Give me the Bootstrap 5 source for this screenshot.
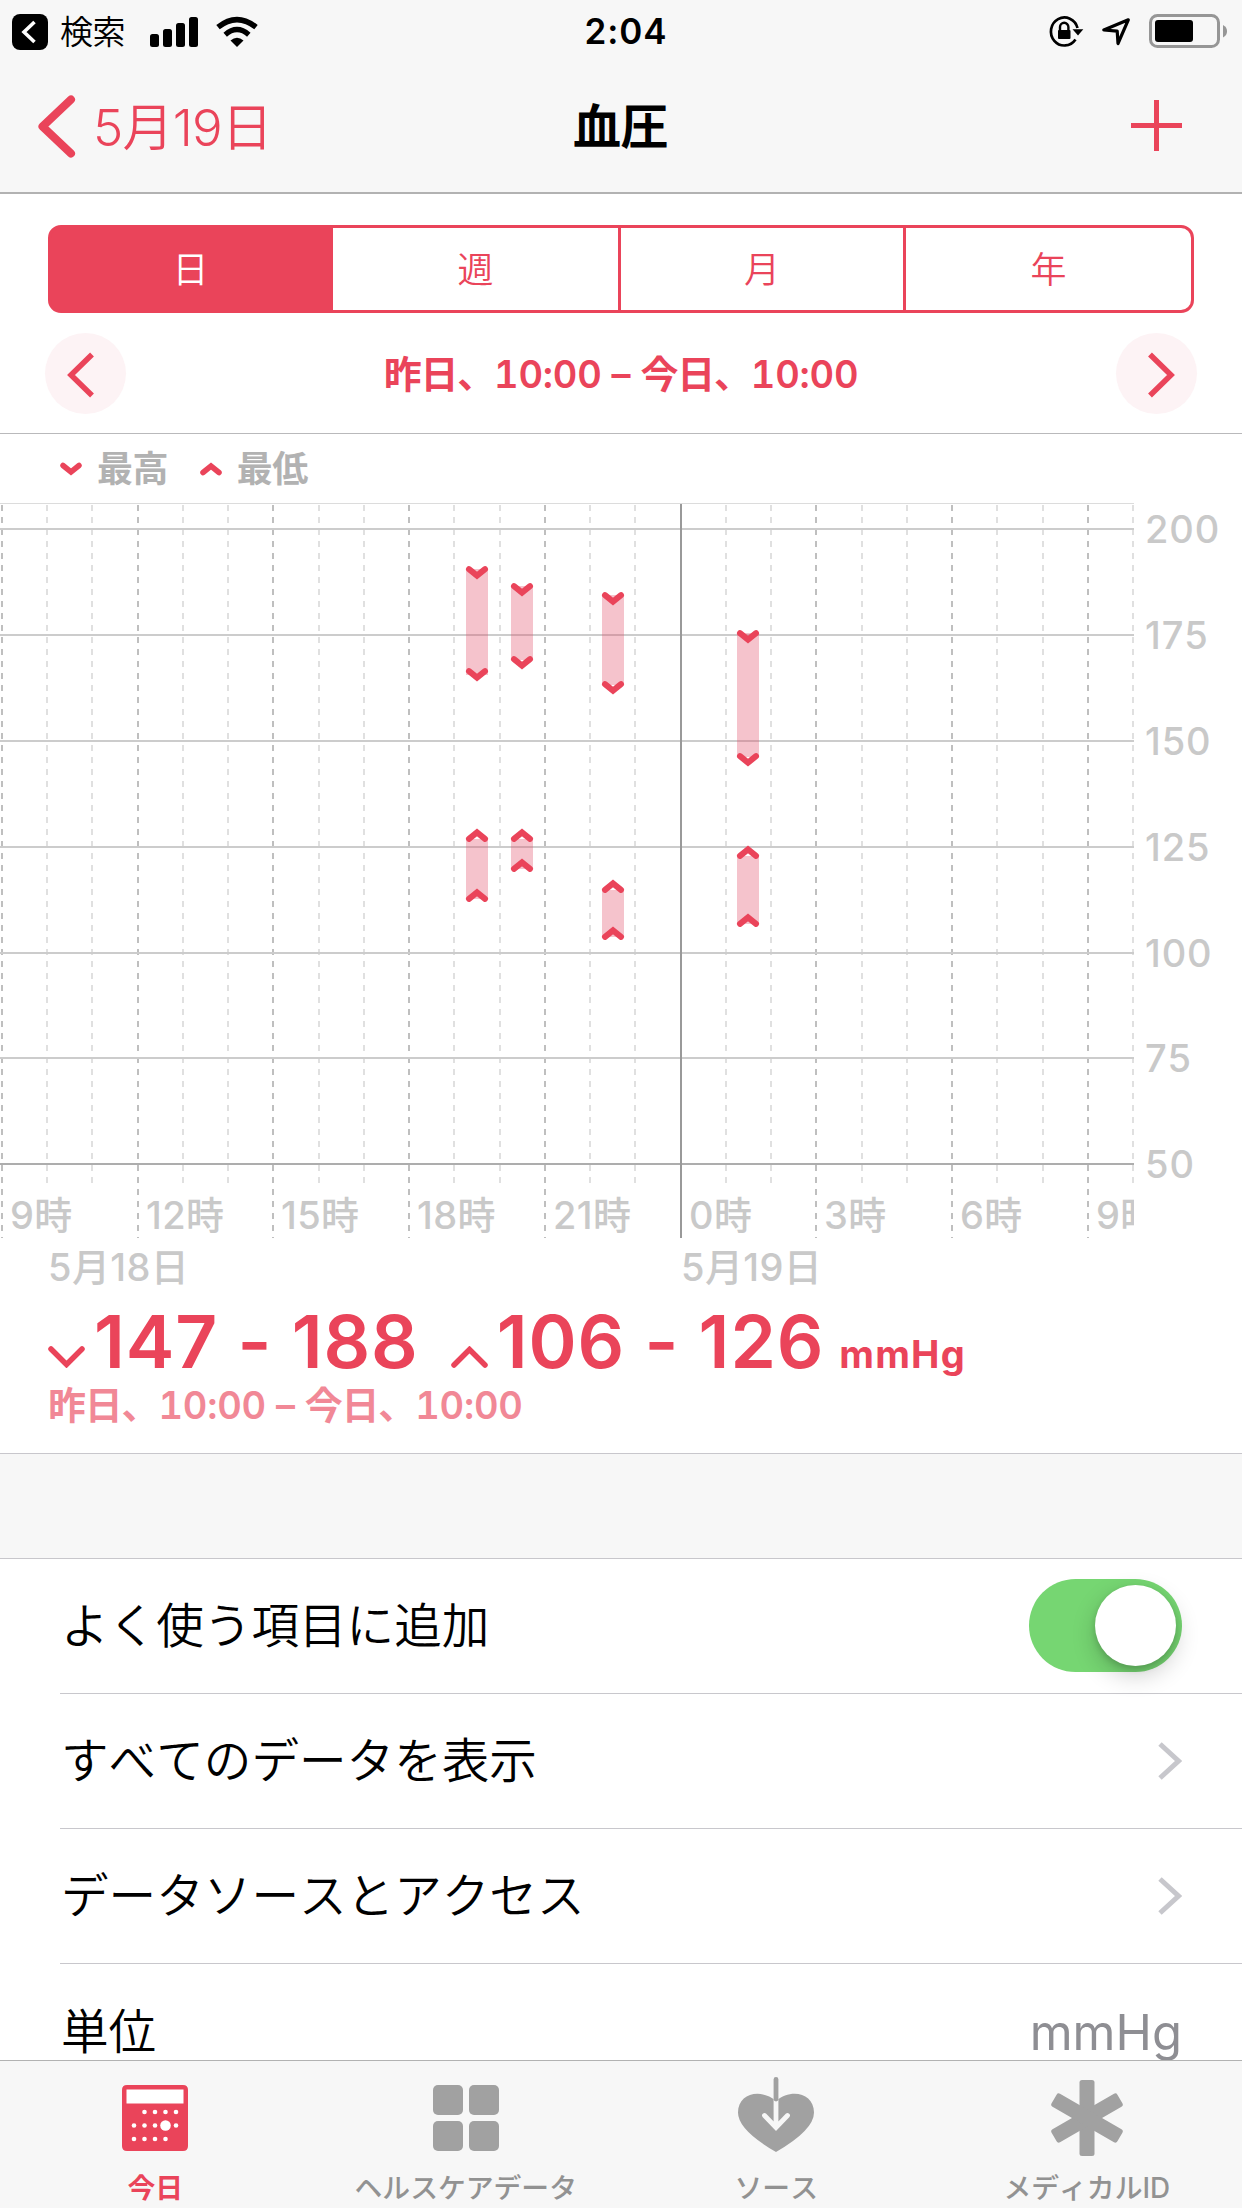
<!DOCTYPE html>
<html lang="ja">
<head>
<meta charset="utf-8">
<meta name="viewport" content="width=device-width, initial-scale=1">
<title>血圧</title>
<link rel="stylesheet" href="https://cdn.jsdelivr.net/npm/bootstrap@5.3.0/dist/css/bootstrap.min.css">
<style>
:root{--rd:#ea445a;--hair:#c8c7cc;--bar:#f7f7f7}
body{width:1242px;height:2208px;overflow:hidden;background:#fff;color:#000;font-family:Inter,"Noto Sans CJK JP",sans-serif;font-size:38px;line-height:1;white-space:nowrap;font-kerning:none}
svg{display:block;flex:none}
.screen{height:2208px}
.tint{color:var(--rd)}
.top-bar{height:194px;background:var(--bar);border-bottom:2px solid #b2b2b2}
.status{height:64px;padding:0 15px 0 12px}
.status .side{width:480px}
.back-app{font-size:33px;margin-left:12px;letter-spacing:-.5px;font-weight:350}
.clock{font-size:35px;font-weight:600;letter-spacing:.9px;margin-left:13px;padding-bottom:2px}
.title-row{height:128px;padding:0 60px 2px 38px}
.title-row .side{width:400px}
.back-label{font-size:51px;letter-spacing:-.8px;margin-left:17px;font-weight:350}
.title{font-size:48px;font-weight:700;letter-spacing:-.5px;margin-left:21px}
.seg{margin:31px 48px 0;width:1146px;height:88px}
.seg .btn{--bs-btn-color:var(--rd);--bs-btn-border-color:var(--rd);--bs-btn-active-bg:var(--rd);--bs-btn-active-border-color:var(--rd);--bs-btn-active-color:#fff;--bs-btn-border-width:3px;--bs-btn-border-radius:13px;--bs-btn-font-size:36px;--bs-btn-line-height:1;padding:1px 0 0;flex:0 0 291px;font-weight:350}
.seg .btn:first-child{flex-basis:285px}
.seg .btn:nth-child(3){flex-basis:288px}
.seg.btn-group>.btn:not(:first-child){margin-left:-3px}
.pager{height:121px;padding:1px 45px 0;border-bottom:1px solid #b9b9bb}
.pager .btn{width:81px;height:81px;background:#fdf3f5;padding:0}
.range,.sub{font-size:38px;font-weight:600;font-variant-numeric:tabular-nums;letter-spacing:-.2px}
.cjk{letter-spacing:-1.2px}
.legend-row{height:69px;padding:1px 60px 0;color:#b2b2b2;font-size:36px;font-weight:700;letter-spacing:-.6px}
.chart-text{fill:#c9c9c9;font-size:38px;font-weight:500}
.scale{letter-spacing:.9px}
.hours{letter-spacing:.4px}
.summary{height:151px;padding:7px 48px 0}
.big{font-size:73px;font-weight:600;line-height:66px;letter-spacing:.9px}
.unit{font-size:38px;font-weight:700;letter-spacing:1.2px}
.sub{opacity:.63;line-height:36px}
.spacer{height:106px;background:var(--bar);border-top:1px solid var(--hair);border-bottom:1px solid var(--hair)}
.rows{padding-left:60px}
.rows .list-group-item{height:135.1px;padding:0 60px 0 1px;border-color:var(--hair);color:#000;font-size:47.6px;background:none;font-weight:350}
.rows .value{color:#8e8e93;font-size:49px;font-weight:400;padding-top:2px}
.form-switch{padding:0;min-height:0}
.form-switch .form-check-input{display:block;width:153px;height:93px;margin:0;float:none;border:0;border-radius:47px;background:#76d672;position:relative;overflow:visible}
.form-switch .form-check-input::after{content:"";position:absolute;right:6px;top:6px;width:81px;height:81px;border-radius:50%;background:#fff;box-shadow:0 9px 24px rgba(0,0,0,.2),0 3px 6px rgba(0,0,0,.15)}
.tabs{height:148px;background:var(--bar);border-top:1px solid #b2b2b2;left:0;right:0;bottom:0}
.tabs .nav-link{padding:15px 0 0;color:#929292;font-size:27.8px;font-weight:500}
.tabs .nav-link.active{color:var(--rd);font-weight:600}
.tabs span{margin-top:13px}
</style>
<script src="https://cdn.jsdelivr.net/npm/bootstrap@5.3.0/dist/js/bootstrap.bundle.min.js"></script>
</head>
<body>
<div class="screen d-flex flex-column position-relative overflow-hidden">
<header class="top-bar flex-shrink-0">
 <div class="status d-flex align-items-center justify-content-between">
  <div class="side d-flex align-items-center">
   <svg width="36" height="36"><rect width="36" height="36" rx="8"/><path d="M22.500 8 12 18l10.500 10" fill="none" stroke="#fff" stroke-width="3.600"/></svg>
   <span class="back-app">検索</span>
   <svg width="110" height="32" viewBox="148 14 110 32" style="margin-left:23px"><rect x="150" y="32" width="9" height="13" rx="2.500"/><rect x="163" y="27" width="9" height="18" rx="2.500"/><rect x="176" y="21" width="9" height="24" rx="2.500"/><rect x="189" y="15" width="9" height="30" rx="2.500"/><path d="M218 25.200Q237 10 256 25.200" fill="none" stroke="#000" stroke-width="5.500"/><path d="M225.200 32.700Q237 22.500 248.800 32.700" fill="none" stroke="#000" stroke-width="5.300"/><path d="M230.500 38.500Q237 33 243.500 38.500L237 45z"/></svg>
  </div>
  <div class="clock">2:04</div>
  <div class="side d-flex align-items-center justify-content-end">
   <svg width="180" height="36" viewBox="1047 13 180 36"><path d="M1075.500 38.500A13.500 14 0 1 1 1077.500 27" fill="none" stroke="#000" stroke-width="2.700"/><path d="M1072.500 28.300h10.800L1078 34.500z"/><rect x="1058" y="29" width="12.500" height="9" rx="1"/><path d="M1060 30v-4a4.200 4.200 0 0 1 8.400 0v4" fill="none" stroke="#000" stroke-width="2.400"/><path d="M1103.800 29 1128.300 18.800 1118 42.500 1117.200 30.200z" fill="none" stroke="#000" stroke-width="3.200" stroke-linejoin="round"/><rect x="1150.500" y="14.500" width="68" height="31" rx="7" fill="none" stroke="#969696" stroke-width="3"/><rect x="1155" y="19" width="38" height="22" rx="3"/><path d="M1223 24v12.500q4-2 4-6.200t-4-6.300z" fill="#969696"/></svg>
  </div>
 </div>
 <div class="title-row d-flex align-items-center justify-content-between">
  <div class="side d-flex align-items-center tint">
   <svg width="38" height="64"><path d="M33 4.500 4.500 31.500 33 58.500" fill="none" stroke="currentColor" stroke-width="8" stroke-linecap="round" stroke-linejoin="round"/></svg>
   <span class="back-label">5月19日</span>
  </div>
  <div class="title">血圧</div>
  <div class="side d-flex justify-content-end tint pb-1"><svg width="51" height="51"><path d="M0 25.500H51M25.500 0V51" stroke="currentColor" stroke-width="5"/></svg></div>
 </div>
</header>

<div class="btn-group seg flex-shrink-0">
 <button class="btn active d-flex align-items-center justify-content-center">日</button>
 <button class="btn d-flex align-items-center justify-content-center">週</button>
 <button class="btn d-flex align-items-center justify-content-center">月</button>
 <button class="btn d-flex align-items-center justify-content-center">年</button>
</div>

<div class="pager d-flex align-items-center justify-content-between flex-shrink-0 tint">
 <button class="btn rounded-circle tint border-0"><svg width="81" height="81"><path d="M47 21.500 26 42 47 62.500" fill="none" stroke="currentColor" stroke-width="5.500"/></svg></button>
 <div class="range"><span class="cjk">昨日、</span>10:00 – <span class="cjk">今日、</span>10:00</div>
 <button class="btn rounded-circle tint border-0"><svg width="81" height="81"><path d="M34 21.500 55 42 34 62.500" fill="none" stroke="currentColor" stroke-width="5.500"/></svg></button>
</div>

<div class="legend-row d-flex align-items-center flex-shrink-0">
 <svg class="tint" width="22" height="14"><path d="M3 3.500 11 10 19 3.500" fill="none" stroke="currentColor" stroke-width="5.500" stroke-linecap="round"/></svg>
 <span style="margin:0 32px 0 15px">最高</span>
 <svg class="tint" width="22" height="14"><path d="M3 10.500 11 4 19 10.500" fill="none" stroke="currentColor" stroke-width="5.500" stroke-linecap="round"/></svg>
 <span style="margin-left:15px">最低</span>
</div>

<svg class="chart" width="1242" height="799" viewBox="0 503 1242 799">
 <defs>
  <clipPath id="plot"><rect x="0" y="503" width="1134" height="799"/></clipPath>
  <path id="dn" d="M-8 3.200 0 9.700 8 3.200" fill="none" stroke="#ea445a" stroke-width="6" stroke-linecap="round"/>
  <path id="up" d="M-8 9.800 0 3.300 8 9.800" fill="none" stroke="#ea445a" stroke-width="6" stroke-linecap="round"/>
 </defs>
 <path d="M0 503.500H1134" stroke="#dcdcdc" stroke-width="1"/>
 <path d="M47 505V1183M92 505V1183M183 505V1183M228 505V1183M319 505V1183M364 505V1183M454 505V1183M500 505V1183M590 505V1183M635 505V1183M726 505V1183M771 505V1183M862 505V1183M907 505V1183M997 505V1183M1043 505V1183M1133 505V1183" stroke="#e0e0e0" stroke-width="2" stroke-dasharray="6"/>
 <path d="M2 505V1238M138 505V1238M273 505V1238M409 505V1238M545 505V1238M816 505V1238M952 505V1238M1088 505V1238" stroke="#bfbfbf" stroke-width="2" stroke-dasharray="6"/>
 <path d="M0 529H1134M0 635H1134M0 741H1134M0 847H1134M0 953H1134M0 1058H1134" stroke="#ccc" stroke-width="2"/>
 <path d="M0 1164H1134" stroke="#adadad" stroke-width="2"/>
 <path d="M681 504V1238" stroke="#999" stroke-width="2"/>
 <g fill="#e04863" fill-opacity=".33"><path d="M466 569h22v106h-22zM511 586h22v74h-22zM602 595h22v90h-22zM737 633h22v124h-22zM466 839h22v60h-22zM511 839h22v30h-22zM602 890h22v47h-22zM737 856h22v68h-22z"/></g>
 <use href="#dn" x="477" y="566"/><use href="#dn" x="477" y="668"/><use href="#dn" x="522" y="583"/><use href="#dn" x="522" y="656"/><use href="#dn" x="613" y="592"/><use href="#dn" x="613" y="681"/><use href="#dn" x="748" y="630"/><use href="#dn" x="748" y="753"/>
 <use href="#up" x="477" y="829"/><use href="#up" x="477" y="889"/><use href="#up" x="522" y="829"/><use href="#up" x="522" y="859"/><use href="#up" x="613" y="880"/><use href="#up" x="613" y="927"/><use href="#up" x="748" y="846"/><use href="#up" x="748" y="914"/>
 <g class="chart-text">
  <g class="scale"><text x="1145" y="543">200</text><text x="1145" y="649">175</text><text x="1145" y="755">150</text><text x="1145" y="861">125</text><text x="1145" y="967">100</text><text x="1145" y="1072">75</text><text x="1145" y="1178">50</text></g>
  <g class="hours" clip-path="url(#plot)"><text x="10" y="1229">9時</text><text x="146" y="1229">12時</text><text x="281" y="1229">15時</text><text x="417" y="1229">18時</text><text x="553" y="1229">21時</text><text x="689" y="1229">0時</text><text x="824" y="1229">3時</text><text x="960" y="1229">6時</text><text x="1096" y="1229">9時</text></g>
  <g class="hours"><text x="48" y="1281">5月18日</text><text x="681" y="1281">5月19日</text></g>
 </g>
</svg>

<section class="summary flex-shrink-0 tint">
 <div class="d-flex align-items-baseline big">
  <svg width="37" height="22"><path d="M3 3 18.500 18.500 34 3" fill="none" stroke="currentColor" stroke-width="5.500" stroke-linecap="round"/></svg>
  <span style="margin-left:9px">147 - 188</span>
  <svg width="37" height="22" style="margin-left:32px"><path d="M3 19 18.500 3.500 34 19" fill="none" stroke="currentColor" stroke-width="5.500" stroke-linecap="round"/></svg>
  <span style="margin-left:9px">106 - 126</span>
  <span class="unit" style="margin-left:15px">mmHg</span>
 </div>
 <div class="sub"><span class="cjk">昨日、</span>10:00 – <span class="cjk">今日、</span>10:00</div>
</section>
<div class="spacer flex-shrink-0"></div>
<div class="list-group list-group-flush rows flex-shrink-0">
 <div class="list-group-item d-flex align-items-center justify-content-between"><span>よく使う項目に追加</span><div class="form-check form-switch"><input class="form-check-input" type="checkbox" role="switch" checked></div></div>
 <div class="list-group-item d-flex align-items-center justify-content-between"><span>すべてのデータを表示</span><svg width="24" height="38"><path d="M2 2 20.500 19 2 36" fill="none" stroke="#c7c7cc" stroke-width="5"/></svg></div>
 <div class="list-group-item d-flex align-items-center justify-content-between"><span>データソースとアクセス</span><svg width="24" height="38"><path d="M2 2 20.500 19 2 36" fill="none" stroke="#c7c7cc" stroke-width="5"/></svg></div>
 <div class="list-group-item d-flex align-items-center justify-content-between"><span>単位</span><span class="value">mmHg</span></div>
</div>

<nav class="tabs nav nav-fill position-absolute flex-nowrap">
 <a class="nav-link active d-flex flex-column align-items-center w-25"><svg width="80" height="86" viewBox="0 0 80 86"><path d="M12 9h56q5 0 5 5v56q0 5-5 5H12q-5 0-5-5V14q0-5 5-5z" fill="#ea445a"/><path d="M11.500 13.500h57v14h-57z" fill="#fff"/><g fill="#fff"><circle cx="29.500" cy="36" r="2.300"/><circle cx="40" cy="36" r="2.300"/><circle cx="50.500" cy="36" r="2.300"/><circle cx="61" cy="36" r="2.300"/><circle cx="19" cy="49.500" r="2.300"/><circle cx="29.500" cy="49.500" r="2.300"/><circle cx="40" cy="49.500" r="2.300"/><circle cx="50.500" cy="49.500" r="5.300"/><circle cx="61" cy="49.500" r="2.300"/><circle cx="19" cy="63" r="2.300"/><circle cx="29.500" cy="63" r="2.300"/><circle cx="40" cy="63" r="2.300"/><circle cx="50.500" cy="63" r="2.300"/></g></svg><span>今日</span></a>
 <a class="nav-link d-flex flex-column align-items-center w-25"><svg width="80" height="86" fill="#a1a1a1"><rect x="7" y="9" width="30" height="30" rx="5"/><rect x="43" y="9" width="30" height="30" rx="5"/><rect x="7" y="45" width="30" height="30" rx="5"/><rect x="43" y="45" width="30" height="30" rx="5"/></svg><span>ヘルスケアデータ</span></a>
 <a class="nav-link d-flex flex-column align-items-center w-25"><svg width="80" height="86"><path d="M40 76Q2 54 2 36.500C2 17 25 12 40 25 55 12 78 17 78 36.500Q78 54 40 76z" fill="#a1a1a1"/><path d="M40 24V50M28.500 39.500 40 51.500 51.500 39.500" fill="none" stroke="#f7f7f7" stroke-width="4.800" stroke-linecap="round"/><path d="M40 3.500V23" stroke="#a1a1a1" stroke-width="4.800" stroke-linecap="round"/></svg><span>ソース</span></a>
 <a class="nav-link d-flex flex-column align-items-center w-25"><svg width="80" height="86" fill="#a1a1a1"><rect x="32.500" y="4" width="15" height="76" rx="2.500"/><rect x="32.500" y="4" width="15" height="76" rx="2.500" transform="rotate(60 40 42)"/><rect x="32.500" y="4" width="15" height="76" rx="2.500" transform="rotate(-60 40 42)"/></svg><span>メディカルID</span></a>
</nav>
</div>
</body>
</html>
